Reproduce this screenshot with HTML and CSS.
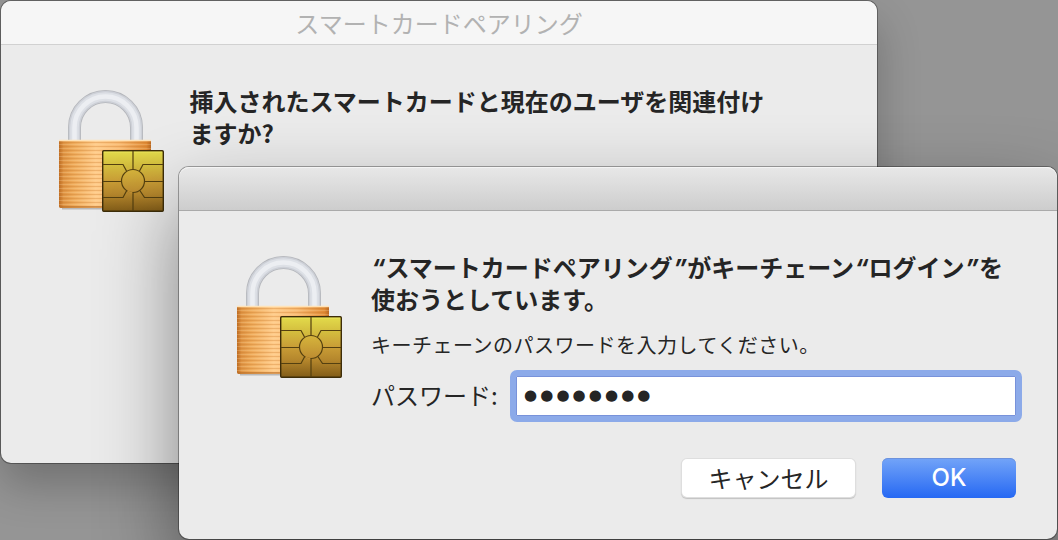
FILE: index.html
```html
<!DOCTYPE html>
<html lang="ja">
<head>
<meta charset="utf-8">
<title>スマートカードペアリング</title>
<link rel="stylesheet" href="styles.css">
</head>
<body>
<svg class="defs" aria-hidden="true">
  <defs>
    <linearGradient id="body" x1="0" x2="1" y1="0" y2="0">
      <stop offset="0" stop-color="#bd6b22"/><stop offset=".05" stop-color="#df9444"/><stop offset=".16" stop-color="#eeaa5a"/><stop offset=".4" stop-color="#ffcb8a"/><stop offset=".65" stop-color="#f8b971"/><stop offset=".95" stop-color="#e08a35"/><stop offset="1" stop-color="#b96620"/>
    </linearGradient>
    <linearGradient id="chip" x1="0" x2="0" y1="0" y2="1">
      <stop offset="0" stop-color="#e3dc4b"/><stop offset=".25" stop-color="#d3bd3e"/><stop offset=".5" stop-color="#c99d36"/><stop offset=".72" stop-color="#b4862c"/><stop offset="1" stop-color="#815c18"/>
    </linearGradient>
    <linearGradient id="disc" x1="0" x2="0" y1="0" y2="1">
      <stop offset="0" stop-color="#d6b53c"/><stop offset="1" stop-color="#bd8c31"/>
    </linearGradient>
    <pattern id="ridges" width="4" height="4" patternUnits="userSpaceOnUse">
      <path d="M0 .5H4" stroke="#ffe0a8" stroke-opacity=".25"/><path d="M0 2.5H4" stroke="#c87829" stroke-opacity=".3"/>
    </pattern>
    <symbol id="lock" viewBox="0 0 108 126">
      <path d="M4 120.800H46" stroke="#999" stroke-width="1.500" opacity=".6"/>
      <g fill="none">
        <path d="M16.500 54V39.500A31 31 0 0 1 78.500 39.500V54" stroke="#b4b6bb" stroke-width="13"/>
        <path d="M16.500 54V39.500A31 31 0 0 1 78.500 39.500V54" stroke="#cdd0d7" stroke-width="11.400"/>
        <path d="M16.500 54V39.500A31 31 0 0 1 78.500 39.500V54" stroke="#dde0e6" stroke-width="8.500"/>
        <path d="M16.500 54V39.500A31 31 0 0 1 78.500 39.500V54" stroke="#eceef2" stroke-width="4.500"/>
      </g>
      <path d="M1 52H93V118Q93 120 90 120H4Q1 120 1 118Z" fill="url(#body)"/>
      <rect x="1" y="53" width="92" height="66" fill="url(#ridges)"/>
      <path d="M1 52.500H93" stroke="#ffe3b8" stroke-width="1.500"/>
      <path d="M1.500 119H93" stroke="#b66d28"/>
      <rect x="44.700" y="62.700" width="60.600" height="60.600" rx="1" fill="url(#chip)" stroke="#3d2d09" stroke-width="1.400"/>
      <path d="M46 64H104" stroke="#f2ef69" stroke-opacity=".55"/>
      <g fill="none" stroke="#544010" stroke-width="1.200">
        <path d="M75 63V82M75 104V123M45 76.500H65L68.500 83M105 76.500H85L81.500 83M45 93.500H63.500M87 93.500H105M45 109.500H65L69 102M105 109.500H86.500L81.500 102"/>
        <circle cx="75" cy="93" r="11.500" fill="url(#disc)"/>
      </g>
      <path d="M69.500 103.200Q72 104.500 74.300 104.500" fill="none" stroke="#c08f32" stroke-width="1.800"/>
    </symbol>
  </defs>
</svg>
<main class="desktop">
  <section class="window window-back">
    <header class="titlebar titlebar-light">スマートカードペアリング</header>
    <div class="content">
      <svg class="lock"><use href="#lock"/></svg>
      <h1 class="heading">挿入されたスマートカードと現在のユーザを関連付け<br>ますか?</h1>
    </div>
  </section>
  <section class="window window-front">
    <header class="titlebar titlebar-gray"></header>
    <div class="content">
      <svg class="lock"><use href="#lock"/></svg>
      <div class="form">
        <h1 class="heading"><span class="q">“</span>スマートカードペアリング<span class="q">”</span>がキーチェーン<span class="q">“</span>ログイン<span class="q">”</span>を<br>使おうとしています。</h1>
        <p class="message">キーチェーンのパスワードを入力してください。</p>
        <div class="field-row"><span class="label">パスワード:</span><div class="field">●●●●●●●●</div></div>
        <div class="actions"><button class="button">キャンセル</button><button class="button button-primary">OK</button></div>
      </div>
    </div>
  </section>
</main>
</body>
</html>
```
FILE: styles.css
```css
* { box-sizing: border-box; }
body { margin: 0; font-family: "Noto Sans CJK JP", sans-serif; color: #252525; }
.defs { position: absolute; width: 0; height: 0; }
.desktop { position: relative; width: 1058px; height: 540px; overflow: hidden; background: #959595; }
.window { position: absolute; background: #ebebeb; border-radius: 10px; }
.window-back { left: 1px; top: 1px; width: 876px; height: 462px; box-shadow: 0 0 0 1px rgba(0,0,0,.32), 0 22px 44px rgba(0,0,0,.24); }
.window-front { left: 179px; top: 167px; width: 878px; height: 372px; box-shadow: 0 0 0 1px rgba(0,0,0,.32), 0 36px 80px rgba(0,0,0,.46); }
.titlebar { height: 44px; border-radius: 10px 10px 0 0; text-align: center; font-size: 24px; line-height: 43px; }
.titlebar-light { background: #f6f6f6; border-bottom: 1px solid #d1d1d1; color: #b2b2b2; }
.titlebar-gray { background: linear-gradient(#e8e8e8, #cdcdcd); border-bottom: 1px solid #aaa; box-shadow: inset 0 1px #f4f4f4; }
.content { display: flex; padding: 42px 36px 0 57px; }
.lock { flex: none; width: 108px; height: 126px; margin-top: 1px; }
.heading { margin: -2px 0 0 23.500px; font-size: 24px; line-height: 32px; font-weight: 700; white-space: nowrap; }
.form { margin-left: 27px; flex: 1; }
.form .heading { margin-left: 0; }
.q { display: inline-block; width: 14.500px; font-family: Inter, sans-serif; font-style: italic; line-height: 1; text-align: center; }
.message { margin: 14px 0 0; font-size: 20px; line-height: 32px; letter-spacing: .5px; white-space: nowrap; }
.field-row { display: flex; align-items: center; margin-top: 9px; }
.label { width: 139px; padding-bottom: 2px; font-size: 24px; line-height: 50px; white-space: nowrap; }
.field { width: 512px; height: 52px; flex: none; border: 6px solid #8caae9; border-radius: 7px; background: #fff; box-shadow: inset 0 0 0 1px #7892da; padding-left: 8px; font: 15px/39px "DejaVu Sans", sans-serif; letter-spacing: 3.100px; }
.actions { display: flex; justify-content: flex-end; gap: 26px; margin: 36px 6px 0 0; }
.button { width: 175px; height: 40px; padding: 0; border: 0; border-radius: 6px; background: #fff; box-shadow: inset 0 0 0 1px rgba(0,0,0,.13), 0 1px 1px rgba(0,0,0,.18); color: #252525; font: 24px/38px "Noto Sans CJK JP", sans-serif; }
.button-primary { width: 134px; background: linear-gradient(#73a4f8, #2668f3); box-shadow: inset 0 1px #6d92dc; color: #fff; font-family: Inter, sans-serif; font-weight: 500; }
```
